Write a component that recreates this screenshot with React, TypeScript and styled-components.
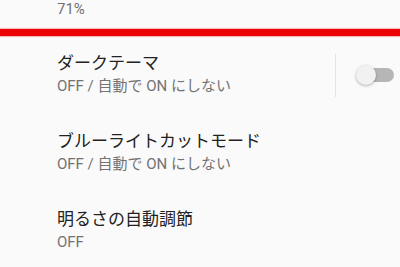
import React from "react";
import styled, { createGlobalStyle } from "styled-components";

const GlobalStyle = createGlobalStyle`
  html, body {
    margin: 0;
    padding: 0;
    background: #fafafa;
  }
  body {
    font-family: Roboto, "Noto Sans CJK JP", sans-serif;
    overflow: hidden;
  }
`;

const Screen = styled.div`
  width: 400px;
  height: 267px;
  overflow: hidden;
  background: #fafafa;
`;

const TopTail = styled.div`
  padding: 0 0 10px 57px;
  font-size: 15px;
  line-height: 19px;
  color: #737373;
`;

const Mark = styled.div`
  height: 7px;
  background: #ec0008;
  box-shadow: 0 0 1px 1px rgba(236, 0, 8, 0.25);
`;

const Row = styled.div`
  display: flex;
  align-items: center;
  height: 78px;
  box-sizing: border-box;
  padding: 0 4px 0 57px;
`;

const Texts = styled.div`
  flex: 1;
  display: flex;
  flex-direction: column;
  padding-bottom: 2px;
`;

const Title = styled.div`
  font-size: 17px;
  line-height: 22px;
  color: #222222;
`;

const Sub = styled.div`
  margin-top: 2px;
  font-size: 15px;
  line-height: 20px;
  color: #737373;
`;

const Divider = styled.div`
  width: 1px;
  height: 43px;
  background: #e3e3e3;
  margin-right: 22px;
`;

const Switch = styled.div<{ $on?: boolean }>`
  position: relative;
  width: 36px;
  height: 14px;
  border-radius: 7px;
  background: ${(p) => (p.$on ? "#f4a0a0" : "#b6b6b6")};
  margin-right: 2px;
`;

const Thumb = styled.div<{ $on?: boolean }>`
  position: absolute;
  top: -3px;
  left: ${(p) => (p.$on ? "16px" : "-2px")};
  width: 20px;
  height: 20px;
  border-radius: 50%;
  background: #f1f1f1;
  box-shadow: 0 1px 3px rgba(0, 0, 0, 0.3);
`;

type Item = { title: string; sub: string; toggle?: boolean };

const items: Item[] = [
  { title: "ダークテーマ", sub: "OFF / 自動で ON にしない", toggle: true },
  { title: "ブルーライトカットモード", sub: "OFF / 自動で ON にしない" },
  { title: "明るさの自動調節", sub: "OFF" },
];

export default function App() {
  return (
    <Screen>
      <GlobalStyle />
      <TopTail>71%</TopTail>
      <Mark />
      {items.map((it) => (
        <Row key={it.title}>
          <Texts>
            <Title>{it.title}</Title>
            <Sub>{it.sub}</Sub>
          </Texts>
          {it.toggle && (
            <>
              <Divider />
              <Switch>
                <Thumb />
              </Switch>
            </>
          )}
        </Row>
      ))}
    </Screen>
  );
}
